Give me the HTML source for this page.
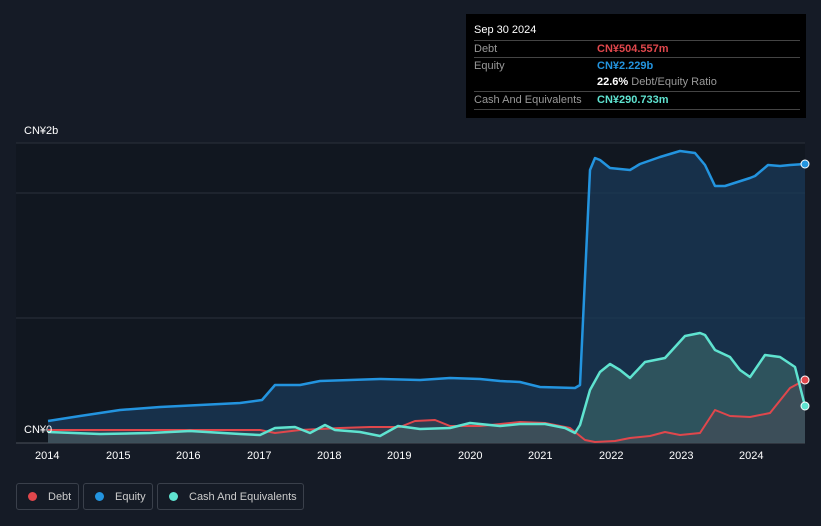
<!DOCTYPE html><html><head><style>
body{margin:0;width:821px;height:526px;background:#151b26;font-family:"Liberation Sans",sans-serif;overflow:hidden;position:relative}
.tt{position:absolute;left:466px;top:14px;width:340px;height:104px;background:#000;color:#fff;font-size:11px}
.row{position:absolute;left:8px;width:326px;border-top:1px solid #444;height:17px;line-height:17px;color:#999}
.row span{position:absolute;left:123px}
.leg{position:absolute;top:483px;height:27px;border:1px solid #3a404b;border-radius:3px;color:#ccc;font-size:11px;line-height:27px;box-sizing:border-box}
.leg i{display:inline-block;width:9px;height:9px;border-radius:50%;margin:0 11px 0 11px;vertical-align:-1px}
.ax{position:absolute;top:450px;color:#fff;font-size:11px}
</style></head><body>
<svg width="821" height="526" style="position:absolute;left:0;top:0">
<defs><linearGradient id="g" x1="0" y1="0" x2="0" y2="1"><stop offset="0" stop-color="#2d6f8c" stop-opacity=".5"/><stop offset="1" stop-color="#3a5060" stop-opacity=".5"/></linearGradient></defs>
<rect x="16" y="143" width="789" height="300" fill="#111720"/>
<line x1="16" y1="143" x2="805" y2="143" stroke="#2b313b"/>
<line x1="16" y1="193" x2="805" y2="193" stroke="#2b313b"/>
<line x1="16" y1="318" x2="805" y2="318" stroke="#2b313b"/>
<line x1="16" y1="443" x2="805" y2="443" stroke="#4a505a"/>
<path d="M48,421 L80,416 120,410 160,407 200,405 240,403 262,400 275,385 300,385 320,381 350,380 380,379 420,380 450,378 480,379 500,381 520,382 540,387 575,388 580,385 590,170 595,158 600,160 610,168 630,170 640,164 660,157 680,151 695,153 705,165 715,186 725,186 750,178 755,176 768,165 780,166 790,165 805,164 L805,443 48,443Z" fill="#1a3a58" opacity=".75"/>
<path d="M48,432 L100,434 150,433 190,431 240,434 260,435 275,428 295,427 310,433 325,425 335,430 360,432 380,436 398,426 420,429 450,428 470,423 500,426 520,424 545,424 565,428 575,433 580,425 590,390 600,372 610,364 620,370 630,378 645,362 665,358 685,336 700,333 705,335 715,350 730,357 740,370 750,377 765,355 780,357 795,367 805,406 L805,443 48,443Z" fill="#3d6b6a" opacity=".6"/>
<path d="M48,430 L200,430 260,430 275,433 300,430 340,428 370,427 400,427 415,421 435,420 450,426 480,426 520,422 545,423 570,428 585,440 595,442 615,441 630,438 650,436 665,432 680,435 700,433 715,410 730,416 750,417 770,413 790,388 805,380 L805,443 48,443Z" fill="#4a4a55" opacity=".5"/>
<path d="M48,421 L80,416 120,410 160,407 200,405 240,403 262,400 275,385 300,385 320,381 350,380 380,379 420,380 450,378 480,379 500,381 520,382 540,387 575,388 580,385 590,170 595,158 600,160 610,168 630,170 640,164 660,157 680,151 695,153 705,165 715,186 725,186 750,178 755,176 768,165 780,166 790,165 805,164" fill="none" stroke="#2394df" stroke-width="2.5" stroke-linejoin="round"/>
<path d="M48,430 L200,430 260,430 275,433 300,430 340,428 370,427 400,427 415,421 435,420 450,426 480,426 520,422 545,423 570,428 585,440 595,442 615,441 630,438 650,436 665,432 680,435 700,433 715,410 730,416 750,417 770,413 790,388 805,380" fill="none" stroke="#e0474c" stroke-width="2" stroke-linejoin="round"/>
<path d="M48,432 L100,434 150,433 190,431 240,434 260,435 275,428 295,427 310,433 325,425 335,430 360,432 380,436 398,426 420,429 450,428 470,423 500,426 520,424 545,424 565,428 575,433 580,425 590,390 600,372 610,364 620,370 630,378 645,362 665,358 685,336 700,333 705,335 715,350 730,357 740,370 750,377 765,355 780,357 795,367 805,406" fill="none" stroke="#5fe3d0" stroke-width="2.5" stroke-linejoin="round"/>
<circle cx="805" cy="164" r="4" fill="#2394df" stroke="#fff"/><circle cx="805" cy="380" r="4" fill="#e0474c" stroke="#fff"/><circle cx="805" cy="406" r="4" fill="#5fe3d0" stroke="#fff"/>
</svg>
<div style="position:absolute;left:24px;top:125px;color:#fff;font-size:11px">CN¥2b</div>
<div style="position:absolute;left:24px;top:424px;color:#fff;font-size:11px">CN¥0</div>
<div class="ax" style="left:35px">2014</div><div class="ax" style="left:106px">2015</div><div class="ax" style="left:176px">2016</div><div class="ax" style="left:247px">2017</div><div class="ax" style="left:317px">2018</div><div class="ax" style="left:387px">2019</div><div class="ax" style="left:458px">2020</div><div class="ax" style="left:528px">2021</div><div class="ax" style="left:599px">2022</div><div class="ax" style="left:669px">2023</div><div class="ax" style="left:739px">2024</div>
<div class="tt">
<div style="position:absolute;left:8px;top:10px;font-size:11px">Sep 30 2024</div>
<div class="row" style="top:26px">Debt<span style="color:#e0474c;font-weight:bold">CN¥504.557m</span></div>
<div class="row" style="top:43px">Equity<span style="color:#2394df;font-weight:bold">CN¥2.229b</span></div>
<div class="row" style="top:60px;border-top:none"><span style="color:#fff;font-weight:bold">22.6% <b style="color:#999;font-weight:normal">Debt/Equity Ratio</b></span></div>
<div class="row" style="top:77px">Cash And Equivalents<span style="color:#5fe3d0;font-weight:bold">CN¥290.733m</span></div>
<div class="row" style="top:95px;height:0"></div>
</div>
<div class="leg" style="left:16px;width:63px"><i style="background:#e0474c"></i>Debt</div>
<div class="leg" style="left:83px;width:70px"><i style="background:#2394df"></i>Equity</div>
<div class="leg" style="left:157px;width:147px"><i style="background:#5fe3d0"></i>Cash And Equivalents</div>
</body></html>
